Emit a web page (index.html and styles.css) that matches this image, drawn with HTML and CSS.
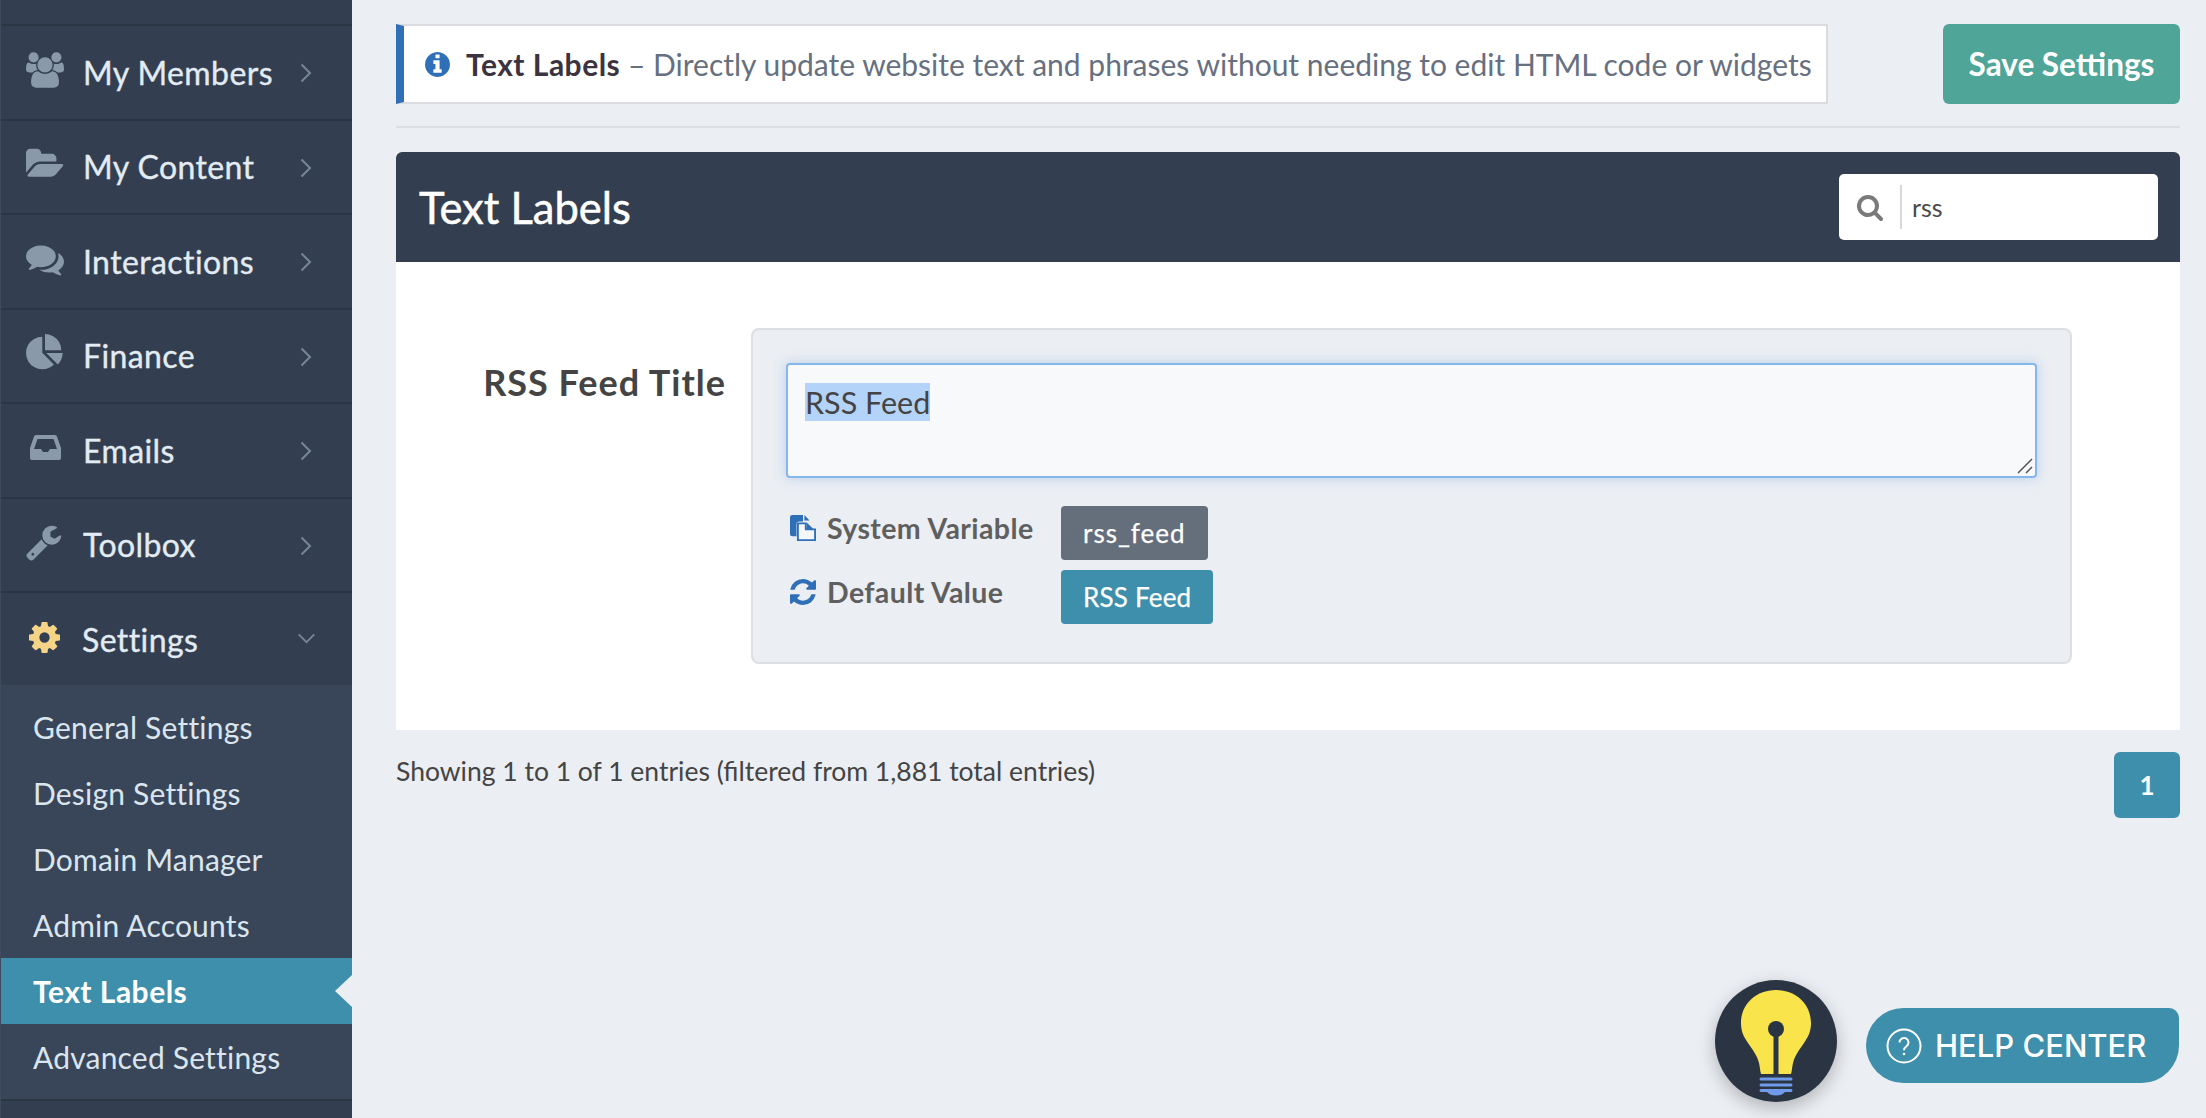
FILE: index.html
```html
<!DOCTYPE html>
<html lang="en">
<head>
<meta charset="utf-8">
<title>Text Labels</title>
<link rel="stylesheet" href="styles.css">
</head>
<body>
<div class="app">
  <nav class="sidebar">
    <div class="nav-top"></div>
    <a class="nav-row"><svg class="nav-icon" viewBox="0 0 1920 1792"><path d="M593 896q-162 5-265 128h-134q-82 0-138-40.5t-56-118.5q0-353 124-353 6 0 43.5 21t97.5 42.5 119 21.5q67 0 133-23-5 37-5 66 0 139 81 256zm1071 637q0 120-73 189.5t-194 69.5h-874q-121 0-194-69.5t-73-189.5q0-53 3.5-103.5t14-109 26.5-108.5 43-97.5 62-81 85.5-53.5 111.5-20q10 0 43 21.5t73 48 107 48 135 21.5 135-21.5 107-48 73-48 43-21.5q61 0 111.5 20t85.5 53.5 62 81 43 97.5 26.5 108.5 14 109 3.5 103.5zm-1024-1277q0 106-75 181t-181 75-181-75-75-181 75-181 181-75 181 75 75 181zm704 384q0 159-112.5 271.5t-271.5 112.5-271.5-112.5-112.5-271.5 112.5-271.5 271.5-112.5 271.5 112.5 112.5 271.5zm576 225q0 78-56 118.5t-138 40.5h-134q-103-123-265-128 81-117 81-256 0-29-5-66 66 23 133 23 59 0 119-21.5t97.5-42.5 43.5-21q124 0 124 353zm-128-609q0 106-75 181t-181 75-181-75-75-181 75-181 181-75 181 75 75 181z"/></svg><span class="nav-label">My Members</span><svg class="chev" viewBox="0 0 12 20"><path d="M1.5 1.5 10 10 1.5 18.500"/></svg></a>
    <a class="nav-row"><svg class="nav-icon" viewBox="0 0 1920 1792"><path d="M1879 952q0 31-31 66l-336 396q-43 51-120.500 86.500t-143.500 35.500h-1088q-34 0-60.500-13t-26.500-43q0-31 31-66l336-396q43-51 120.500-86.500t143.500-35.500h1088q34 0 60.500 13t26.500 43zm-343-344v160h-832q-94 0-197 47.500t-164 119.500l-337 396-5 6q0-4-.5-12.500t-.5-12.500v-960q0-92 66-158t158-66h320q92 0 158 66t66 158v32h544q92 0 158 66t66 158z"/></svg><span class="nav-label">My Content</span><svg class="chev" viewBox="0 0 12 20"><path d="M1.500 1.500 10 10 1.500 18.500"/></svg></a>
    <a class="nav-row"><svg class="nav-icon" viewBox="0 0 1792 1792"><path d="M1408 768q0 139-94 257t-256.500 186.500-353.500 68.500q-86 0-176-16-124 88-278 128-36 9-86 16h-3q-11 0-20.500-8t-11.500-21q-1-3-1-6.500t.5-6.500 2-6l2.500-5 3.500-5.500 4-5 4.500-5 4-4.500q5-6 23-25t26-29.500 22.500-29 25-38.500 20.500-44q-124-72-195-177t-71-224q0-139 94-257t256.500-186.500 353.500-68.500 353.500 68.500 256.500 186.500 94 257zm384 256q0 120-71 224.500t-195 176.500q10 24 20.500 44t25 38.500 22.500 29 26 29.500 23 25q1 1 4 4.500t4.500 5 4 5 3.500 5.500l2.500 5 2 6 .5 6.500-1 6.500q-3 14-13 22t-22 7q-50-7-86-16-154-40-278-128-90 16-176 16-271 0-472-132 58 4 88 4 161 0 309-45t264-129q125-92 192-212t67-254q0-77-23-152 129 71 204 178t75 230z"/></svg><span class="nav-label">Interactions</span><svg class="chev" viewBox="0 0 12 20"><path d="M1.500 1.500 10 10 1.500 18.500"/></svg></a>
    <a class="nav-row"><svg class="nav-icon" viewBox="0 0 1792 1792"><path d="M768 890l546 546q-106 108-247.500 168t-298.500 60q-209 0-385.500-103t-279.500-279.500-103-385.500 103-385.500 279.500-279.500 385.500-103v762zm187 6h773q0 157-60 298.500t-168 247.500zm709-128h-768v-768q209 0 385.500 103t279.500 279.500 103 385.500z"/></svg><span class="nav-label">Finance</span><svg class="chev" viewBox="0 0 12 20"><path d="M1.500 1.500 10 10 1.500 18.500"/></svg></a>
    <a class="nav-row"><svg class="nav-icon inbox" viewBox="0 0 31 25"><path fill-rule="evenodd" d="M6 0h19q1.500 0 2 1.500l4 11.500v10a2 2 0 0 1-2 2H2a2 2 0 0 1-2-2V13L4 1.500Q4.500 0 6 0zM7.500 4 4 14h7l2 3h5l2-3h7L23.500 4z"/></svg><span class="nav-label">Emails</span><svg class="chev" viewBox="0 0 12 20"><path d="M1.500 1.500 10 10 1.500 18.500"/></svg></a>
    <a class="nav-row"><svg class="nav-icon" viewBox="0 0 1792 1792"><path d="M384 1472q0-26-19-45t-45-19-45 19-19 45 19 45 45 19 45-19 19-45zm644-420l-682 682q-37 37-90 37-52 0-91-37l-106-108q-38-36-38-90 0-53 38-91l681-681q39 98 114.500 173.500t173.500 114.500zm634-435q0 39-23 106-47 134-164.500 217.500t-258.500 83.500q-185 0-316.500-131.500t-131.500-316.500 131.500-316.500 316.500-131.500q58 0 121.500 16.500t107.500 46.500q16 11 16 28t-16 28l-293 169v224l193 107q5-3 79-48.500t135.500-81 70.500-35.500q15 0 23.500 10t8.500 25z"/></svg><span class="nav-label">Toolbox</span><svg class="chev" viewBox="0 0 12 20"><path d="M1.500 1.500 10 10 1.500 18.500"/></svg></a>
    <a class="nav-row nav-open"><svg class="nav-icon gear" viewBox="0 128 1536 1536"><path d="M1024 896q0-106-75-181t-181-75-181 75-75 181 75 181 181 75 181-75 75-181zm512-109v222q0 12-8 23t-20 13l-185 28q-19 54-39 91 35 50 107 138 10 12 10 25t-9 23q-27 37-99 108t-94 71q-12 0-26-9l-138-108q-44 23-91 38-16 136-29 186-7 28-36 28h-222q-14 0-24.500-8.500t-11.500-21.500l-28-184q-49-16-90-37l-141 107q-10 9-25 9-14 0-25-11-126-114-165-168-7-10-7-23 0-12 8-23 15-21 51-66.500t54-70.500q-27-50-41-99l-183-27q-13-2-21-12.500t-8-23.500v-222q0-12 8-23t19-13l186-28q14-46 39-92-40-57-107-138-10-12-10-24 0-10 9-23 26-36 98.500-107.500t94.500-71.500q13 0 26 10l138 107q44-23 91-38 16-136 29-186 7-28 36-28h222q14 0 24.500 8.500t11.500 21.500l28 184q49 16 90 37l142-107q9-9 24-9 13 0 25 10 129 119 165 170 7 8 7 22 0 12-8 23-15 21-51 66.500t-54 70.500q26 50 41 98l183 28q13 2 21 12.500t8 23.500z"/></svg><span class="nav-label">Settings</span><svg class="chev-down" viewBox="0 0 20 12"><path d="M1.500 1.500 10 10 18.500 1.500"/></svg></a>
    <div class="submenu">
      <a class="sub-item">General Settings</a>
      <a class="sub-item">Design Settings</a>
      <a class="sub-item">Domain Manager</a>
      <a class="sub-item">Admin Accounts</a>
      <a class="sub-item sub-active">Text Labels</a>
      <a class="sub-item">Advanced Settings</a>
    </div>
  </nav>

  <main class="main">
    <div class="top-row">
      <div class="alert">
        <svg class="alert-icon" viewBox="128 128 1536 1536"><path d="M1152 1376v-160q0-14-9-23t-23-9h-96v-512q0-14-9-23t-23-9h-320q-14 0-23 9t-9 23v160q0 14 9 23t23 9h96v320h-96q-14 0-23 9t-9 23v160q0 14 9 23t23 9h448q14 0 23-9t9-23zm-128-896v-160q0-14-9-23t-23-9h-192q-14 0-23 9t-9 23v160q0 14 9 23t23 9h192q14 0 23-9t9-23zm640 416q0 209-103 385.500t-279.500 279.500-385.500 103-385.500-103-279.500-279.500-103-385.500 103-385.500 279.500-279.500 385.500-103 385.500 103 279.500 279.500 103 385.500z"/></svg>
        <p class="alert-text"><strong>Text Labels</strong> – Directly update website text and phrases without needing to edit HTML code or widgets</p>
      </div>
      <button class="save-btn">Save Settings</button>
    </div>
    <div class="rule"></div>

    <section class="panel">
      <header class="panel-head">
        <h1 class="panel-title">Text Labels</h1>
        <div class="search">
          <svg class="search-icon" viewBox="0 0 1792 1792"><path d="M1216 832q0-185-131.500-316.500t-316.500-131.500-316.500 131.500-131.500 316.500 131.500 316.500 316.500 131.500 316.500-131.500 131.500-316.500zm512 832q0 52-38 90t-90 38q-54 0-90-38l-343-342q-179 124-399 124-143 0-273.500-55.500t-225-150-150-225-55.500-273.500 55.500-273.500 150-225 225-150 273.500-55.500 273.500 55.500 225 150 150 225 55.500 273.500q0 220-124 399l343 343q37 37 37 90z"/></svg>
          <span class="search-value">rss</span>
        </div>
      </header>
      <div class="panel-body">
        <div class="field-label">RSS Feed Title</div>
        <div class="field-box">
          <div class="textarea"><span class="selected">RSS Feed</span>
            <svg class="grip" viewBox="0 0 16 16"><path d="M1 15 15 1M9 15 15 9"/></svg>
          </div>
          <div class="meta-row meta-first">
            <div class="meta-label">
              <svg class="meta-icon" viewBox="0 0 28 28"><path d="M2.500 0h11.500l0 7h-4a3 3 0 0 0-3 3v13h-4.500A2.500 2.500 0 0 1 0 20.500v-18A2.500 2.500 0 0 1 2.500 0z" fill="#2f6fb7"/><path d="M15.500 0 21 6h-5.500z" fill="#2f6fb7"/><path d="M8.500 9h8.500l0 6.500h6.500l3.500 0v11.500h-18.500z" fill="#f4f6f9" stroke="#2f6fb7" stroke-width="2"/><path d="M18 8l8 8h-8z" fill="#2f6fb7"/></svg>
              System Variable
            </div>
            <span class="chip chip-gray">rss_feed</span>
          </div>
          <div class="meta-row">
            <div class="meta-label">
              <svg class="meta-icon" viewBox="128 128 1536 1536"><path fill="#2f6fb7" d="M1639 1056q0 5-1 7-64 268-268 434.500t-478 166.500q-146 0-282.500-55t-243.500-157l-129 129q-19 19-45 19t-45-19-19-45v-448q0-26 19-45t45-19h448q26 0 45 19t19 45-19 45l-137 137q71 66 161 102t187 36q134 0 250-65t186-179q11-17 53-117 8-23 30-23h192q13 0 22.500 9.500t9.500 22.500zm25-800v448q0 26-19 45t-45 19h-448q-26 0-45-19t-19-45 19-45l138-138q-148-137-349-137-134 0-250 65t-186 179q-11 17-53 117-8 23-30 23h-199q-13 0-22.500-9.500t-9.500-22.500v-7q65-268 270-434.500t480-166.500q146 0 284 55.500t245 156.500l130-129q19-19 45-19t45 19 19 45z"/></svg>
              Default Value
            </div>
            <span class="chip chip-teal">RSS Feed</span>
          </div>
        </div>
      </div>
    </section>

    <div class="table-foot">
      <span class="entries">Showing 1 to 1 of 1 entries (filtered from 1,881 total entries)</span>
      <span class="page-btn">1</span>
    </div>
  </main>
</div>

<div class="bulb">
  <svg class="bulb-svg" viewBox="0 0 122 122">
    <path d="M61 10C41 10 26 24 26 43c0 9 3 14 7 20 4 6 9 12 11 20 1 4 1 8 2 11h30c1-3 1-7 2-11 2-8 7-14 11-20 4-6 7-11 7-20C96 24 81 10 61 10z" fill="#f9e44c"/>
    <path d="M58.500 45h5v50h-5z" fill="#2a3443"/>
    <circle cx="61" cy="49" r="8" fill="#2a3443"/>
    <path d="M46 97.500h30a1.500 1.500 0 0 1 0 3H46a1.500 1.500 0 0 1 0-3zM46 103.500h30a1.500 1.500 0 0 1 0 3H46a1.500 1.500 0 0 1 0-3zM46 109h30a1.500 1.500 0 0 1 0 3h-6q-3 3.500-9 3.500t-9-3.500h-6a1.500 1.500 0 0 1 0-3z" fill="#6f9bea"/>
  </svg>
</div>
<a class="help">
  <svg class="help-icon" viewBox="0 0 36 36"><circle cx="18" cy="18" r="16.500"/><path d="M13.500 14.500a4.500 4.500 0 1 1 7 3.700c-1.700 1.200-2.500 2-2.500 4"/><circle class="help-dot" cx="18" cy="26" r="1.300"/></svg>
  HELP CENTER
</a>
</body>
</html>
```

FILE: styles.css
```css
* { box-sizing: border-box; }
html, body { margin: 0; height: 100%; overflow: hidden; }
body {
  background: #ebeef3;
  font-family: "Lato", "Noto Sans", sans-serif;
  color: #3a3a3a;
}
.app { display: flex; height: 1118px; }

/* sidebar */
.sidebar {
  width: 352px;
  flex: none;
  background: #333f50;
  border-left: 1px solid #3e4b5c;
  display: flex;
  flex-direction: column;
}
.nav-top { height: 26px; border-bottom: 2px solid #2a3644; flex: none; }
.nav-row {
  height: 94.500px;
  flex: none;
  display: flex;
  align-items: center;
  padding-left: 25px;
  border-bottom: 2px solid #2a3644;
  color: #e3ebf3;
  font-size: 32px;
  letter-spacing: .4px;
  -webkit-text-stroke: .35px #e3ebf3;
  position: relative;
}
.nav-open { border-bottom: 0; height: 92px; }
.nav-icon { width: 38px; height: 38px; fill: #8a99a9; flex: none; margin-top: -5px; }
.nav-icon.gear { fill: #f5d488; width: 31px; height: 31px; margin: -3px 3px 0 3px; }
.nav-icon.inbox { width: 31px; height: 25px; margin: -5px 3px 0 4px; }
.nav-label { margin-left: 19px; }
.chev, .chev-down {
  position: absolute;
  fill: none;
  stroke: #76869a;
  stroke-width: 2;
}
.chev { left: 299px; top: 37px; width: 12px; height: 20px; }
.chev-down { left: 296px; top: 40px; width: 19px; height: 11px; }
.submenu {
  background: #394659;
  padding: 9px 0;
  border-bottom: 2px solid #2a3644;
  flex: none;
}
.sub-item {
  display: flex;
  align-items: center;
  height: 66px;
  padding-left: 32px;
  color: #dbe5ee;
  font-size: 30px;
  letter-spacing: .2px;
  position: relative;
}
.sub-active { background: #3e8fac; color: #fff; font-weight: 700; letter-spacing: .5px; }
.sub-active::after {
  content: "";
  position: absolute;
  right: 0;
  top: 50%;
  margin-top: -16px;
  border: 16px solid transparent;
  border-left: 0;
  border-right: 17px solid #ebeef3;
}

/* main */
.main { flex: 1; padding: 24px 26px 0 44px; min-width: 0; }
.top-row { display: flex; justify-content: space-between; }
.alert {
  width: 1432px;
  height: 80px;
  background: #fff;
  border: 2px solid #d9dbde;
  border-left: 8px solid #2f6fb7;
  display: flex;
  align-items: center;
  padding-left: 21px;
}
.alert-icon { width: 25px; height: 25px; fill: #2f6fb7; flex: none; }
.alert-text { margin: 0 0 0 16px; font-size: 30px; color: #667080; white-space: nowrap; }
.alert-text strong { color: #3b3340; font-weight: 700; letter-spacing: .5px; }
.save-btn {
  width: 237px;
  height: 80px;
  background: #4fa598;
  border: 0;
  border-radius: 6px;
  color: #fff;
  font: 700 31.500px "Lato", sans-serif;
  padding: 0;
}
.rule { height: 2px; background: #dcdee2; margin: 22px 0 24px; }
.panel { background: #fff; }
.panel-head {
  height: 110px;
  background: #333f50;
  border-radius: 6px 6px 0 0;
  display: flex;
  align-items: center;
  justify-content: space-between;
  padding: 0 22px 0 23px;
}
.panel-title { margin: 0; font-size: 43.500px; font-weight: 400; -webkit-text-stroke: .5px #fff; color: #fff; }
.search {
  width: 319px;
  height: 66px;
  background: #fff;
  border-radius: 5px;
  display: flex;
  align-items: center;
  padding-left: 17px;
}
.search-icon { width: 28px; height: 28px; fill: #7a7a7a; flex: none; }
.search-value {
  margin-left: 16px;
  height: 44px;
  border-left: 2px solid #d8d8d8;
  padding-left: 10px;
  line-height: 44px;
  font-size: 25px;
  color: #4a4a4a;
}
.panel-body {
  height: 468px;
  display: flex;
  align-items: flex-start;
  padding: 66px 0 0 0;
}
.field-label {
  width: 330px;
  text-align: right;
  padding-top: 32px;
  font-size: 36px;
  letter-spacing: 1px;
  font-weight: 700;
  color: #444;
  flex: none;
}
.field-box {
  margin-left: 25px;
  width: 1321px;
  height: 336px;
  background: #ebeef3;
  border: 2px solid #dcdfe4;
  border-radius: 8px;
  padding: 33px 33px 0;
}
.textarea {
  height: 115px;
  background: #f8f9fb;
  border: 2px solid #85b6ec;
  border-radius: 4px;
  box-shadow: 0 0 12px rgba(90, 150, 225, .35);
  padding: 18px 17px;
  position: relative;
  font-size: 30.500px;
  line-height: 38px;
  color: #444;
}
.selected { background: #b4d3f8; display: inline-block; }
.grip {
  position: absolute;
  right: 2px;
  bottom: 2px;
  width: 16px;
  height: 16px;
  fill: none;
  stroke: #555;
  stroke-width: 1.500;
}
.meta-row { display: flex; align-items: flex-start; margin-top: 10px; }
.meta-first { margin-top: 28px; }
.meta-label {
  width: 275px;
  display: flex;
  align-items: center;
  gap: 11px;
  padding: 0 0 0 4px;
  font-size: 28.500px;
  letter-spacing: .4px;
  font-weight: 700;
  color: #5f5f5f;
  height: 44px;
}
.meta-icon { width: 26px; height: 26px; flex: none; }
.chip {
  height: 54px;
  display: inline-flex;
  align-items: center;
  padding: 0 22px;
  border-radius: 4px;
  color: #fff;
  font-size: 26px;
  -webkit-text-stroke: .25px #fff;
}
.chip-gray { background: #656e7b; letter-spacing: 1px; }
.chip-teal { background: #3e8fac; letter-spacing: .2px; }
.table-foot {
  display: flex;
  justify-content: space-between;
  align-items: flex-start;
  padding-top: 22px;
}
.entries { font-size: 26.500px; color: #444; line-height: 38px; }
.page-btn {
  width: 66px;
  height: 66px;
  background: #3e8fac;
  color: #fff;
  border-radius: 6px;
  display: flex;
  align-items: center;
  justify-content: center;
  font-size: 26px;
  font-weight: 700;
}

/* floating help */
.bulb {
  position: fixed;
  left: 1715px;
  top: 980px;
  width: 122px;
  height: 122px;
  border-radius: 50%;
  background: #2a3443;
  box-shadow: 0 6px 18px rgba(0, 0, 0, .25);
}
.bulb-svg { display: block; width: 122px; height: 122px; }
.help {
  position: fixed;
  left: 1866px;
  top: 1008px;
  width: 313px;
  height: 75px;
  background: #3e8fac;
  border-radius: 38px 10px 38px 38px;
  display: flex;
  align-items: center;
  gap: 13px;
  padding-left: 20px;
  color: #fff;
  font: 500 31px "Inter", sans-serif;
}
.help-icon { width: 36px; height: 36px; fill: none; stroke: #fff; stroke-width: 2; flex: none; }
.help-dot { fill: #fff; stroke: none; }
```
